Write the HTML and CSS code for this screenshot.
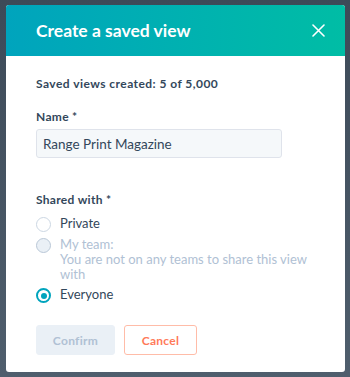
FILE: index.html
```html
<!DOCTYPE html>
<html lang="en">
<head>
  <meta charset="UTF-8" />
  <meta name="viewport" content="width=device-width, initial-scale=1.0" />
  <title>Create a saved view</title>
  <link rel="stylesheet" href="styles.css">
</head>
<body>
  <div class="modal">
    <div class="modal-header">
      <h2>Create a saved view</h2>
      <button class="close-btn" aria-label="Close">
        <svg width="13" height="13" viewBox="0 0 13 13">
          <path d="M1 1 L12 12 M12 1 L1 12" stroke="#fff" stroke-width="1.6" stroke-linecap="round" fill="none"/>
        </svg>
      </button>
    </div>
    <div class="modal-body">
      <p class="count">Saved views created: 5 of 5,000</p>
      <label class="field-label" for="view-name">Name *</label>
      <input id="view-name" class="text-input" type="text" value="Range Print Magazine">
      <p class="field-label shared">Shared with *</p>
      <div class="radio-list">
        <label class="radio-row">
          <span class="radio"></span>
          <span class="radio-text">Private</span>
        </label>
        <label class="radio-row disabled">
          <span class="radio"></span>
          <span class="radio-text">My team:<br>You are not on any teams to share this view with</span>
        </label>
        <label class="radio-row">
          <span class="radio checked"></span>
          <span class="radio-text">Everyone</span>
        </label>
      </div>
      <div class="actions">
        <button class="btn btn-confirm" disabled>Confirm</button>
        <button class="btn btn-cancel">Cancel</button>
      </div>
    </div>
  </div>
</body>
</html>
```

FILE: styles.css
```css
body {
  font-family: Lato, "Noto Sans", Arial, sans-serif;
  background: linear-gradient(180deg, #3d4a58 0%, #4f5e6d 100%);
  margin: 0;
  padding: 5px 5px 5px 6px;
  color: #33475b;
  min-height: 100vh;
  box-sizing: border-box;
}
.modal {
  width: 339px;
  height: 367px;
  background: #fff;
  border-radius: 3px;
  overflow: hidden;
}
.modal-header {
  height: 51px;
  background: linear-gradient(90deg, #00a4bd 0%, #00bda5 100%);
  display: flex;
  align-items: center;
  justify-content: space-between;
  padding: 0 20px 0 30px;
}
.modal-header h2 {
  margin: 0;
  color: #fff;
  font-size: 17.5px;
  font-weight: 700;
  letter-spacing: 0;
}
.close-btn {
  background: none;
  border: 0;
  padding: 0;
  width: 13px;
  height: 13px;
  display: flex;
  cursor: pointer;
}
.modal-body {
  padding: 19px 30px 0 30px;
}
.count {
  margin: 0;
  font-size: 12px;
  line-height: 18px;
  font-weight: 700;
  letter-spacing: 0.45px;
}
.field-label {
  display: block;
  margin: 15px 0 3px 0;
  font-size: 12px;
  line-height: 18px;
  font-weight: 700;
  letter-spacing: 0.3px;
}
.field-label.shared {
  margin: 33px 0 7px 0;
}
.text-input {
  display: block;
  box-sizing: border-box;
  width: 246px;
  height: 29px;
  margin: 0;
  padding: 0 6px;
  background: #f5f8fa;
  border: 1px solid #dfe3eb;
  border-radius: 3px;
  font-family: inherit;
  font-size: 13.5px;
  color: #33475b;
}
.radio-list {
  display: flex;
  flex-direction: column;
  gap: 5px;
}
.radio-row {
  display: flex;
  align-items: flex-start;
  gap: 9px;
  font-size: 13px;
  line-height: 15px;
}
.radio {
  flex: none;
  box-sizing: border-box;
  width: 15px;
  height: 15px;
  margin-top: 1px;
  border: 1px solid #cbd6e2;
  border-radius: 50%;
  background: #fff;
  position: relative;
}
.radio-row.disabled .radio {
  background: #eaf0f6;
  border-color: #b9c7d6;
}
.radio-row.disabled .radio-text {
  color: #b0c1d4;
}
.radio.checked {
  border: 2px solid #00a4bd;
}
.radio.checked::after {
  content: '';
  position: absolute;
  left: 2.5px;
  top: 2.5px;
  width: 6px;
  height: 6px;
  border-radius: 50%;
  background: #00a4bd;
}
.radio-text {
  width: 252px;
}
.actions {
  display: flex;
  gap: 9px;
  margin-top: 22px;
}
.btn {
  box-sizing: border-box;
  height: 30px;
  border-radius: 3px;
  font-family: inherit;
  font-size: 12px;
  font-weight: 700;
  letter-spacing: 0.3px;
  padding: 0;
}
.btn-confirm {
  width: 79px;
  background: #eaf0f6;
  border: 1px solid #eaf0f6;
  color: #b0c1d4;
}
.btn-cancel {
  width: 73px;
  background: #fff;
  border: 1px solid #ffbca8;
  color: #ff7a59;
}
```
